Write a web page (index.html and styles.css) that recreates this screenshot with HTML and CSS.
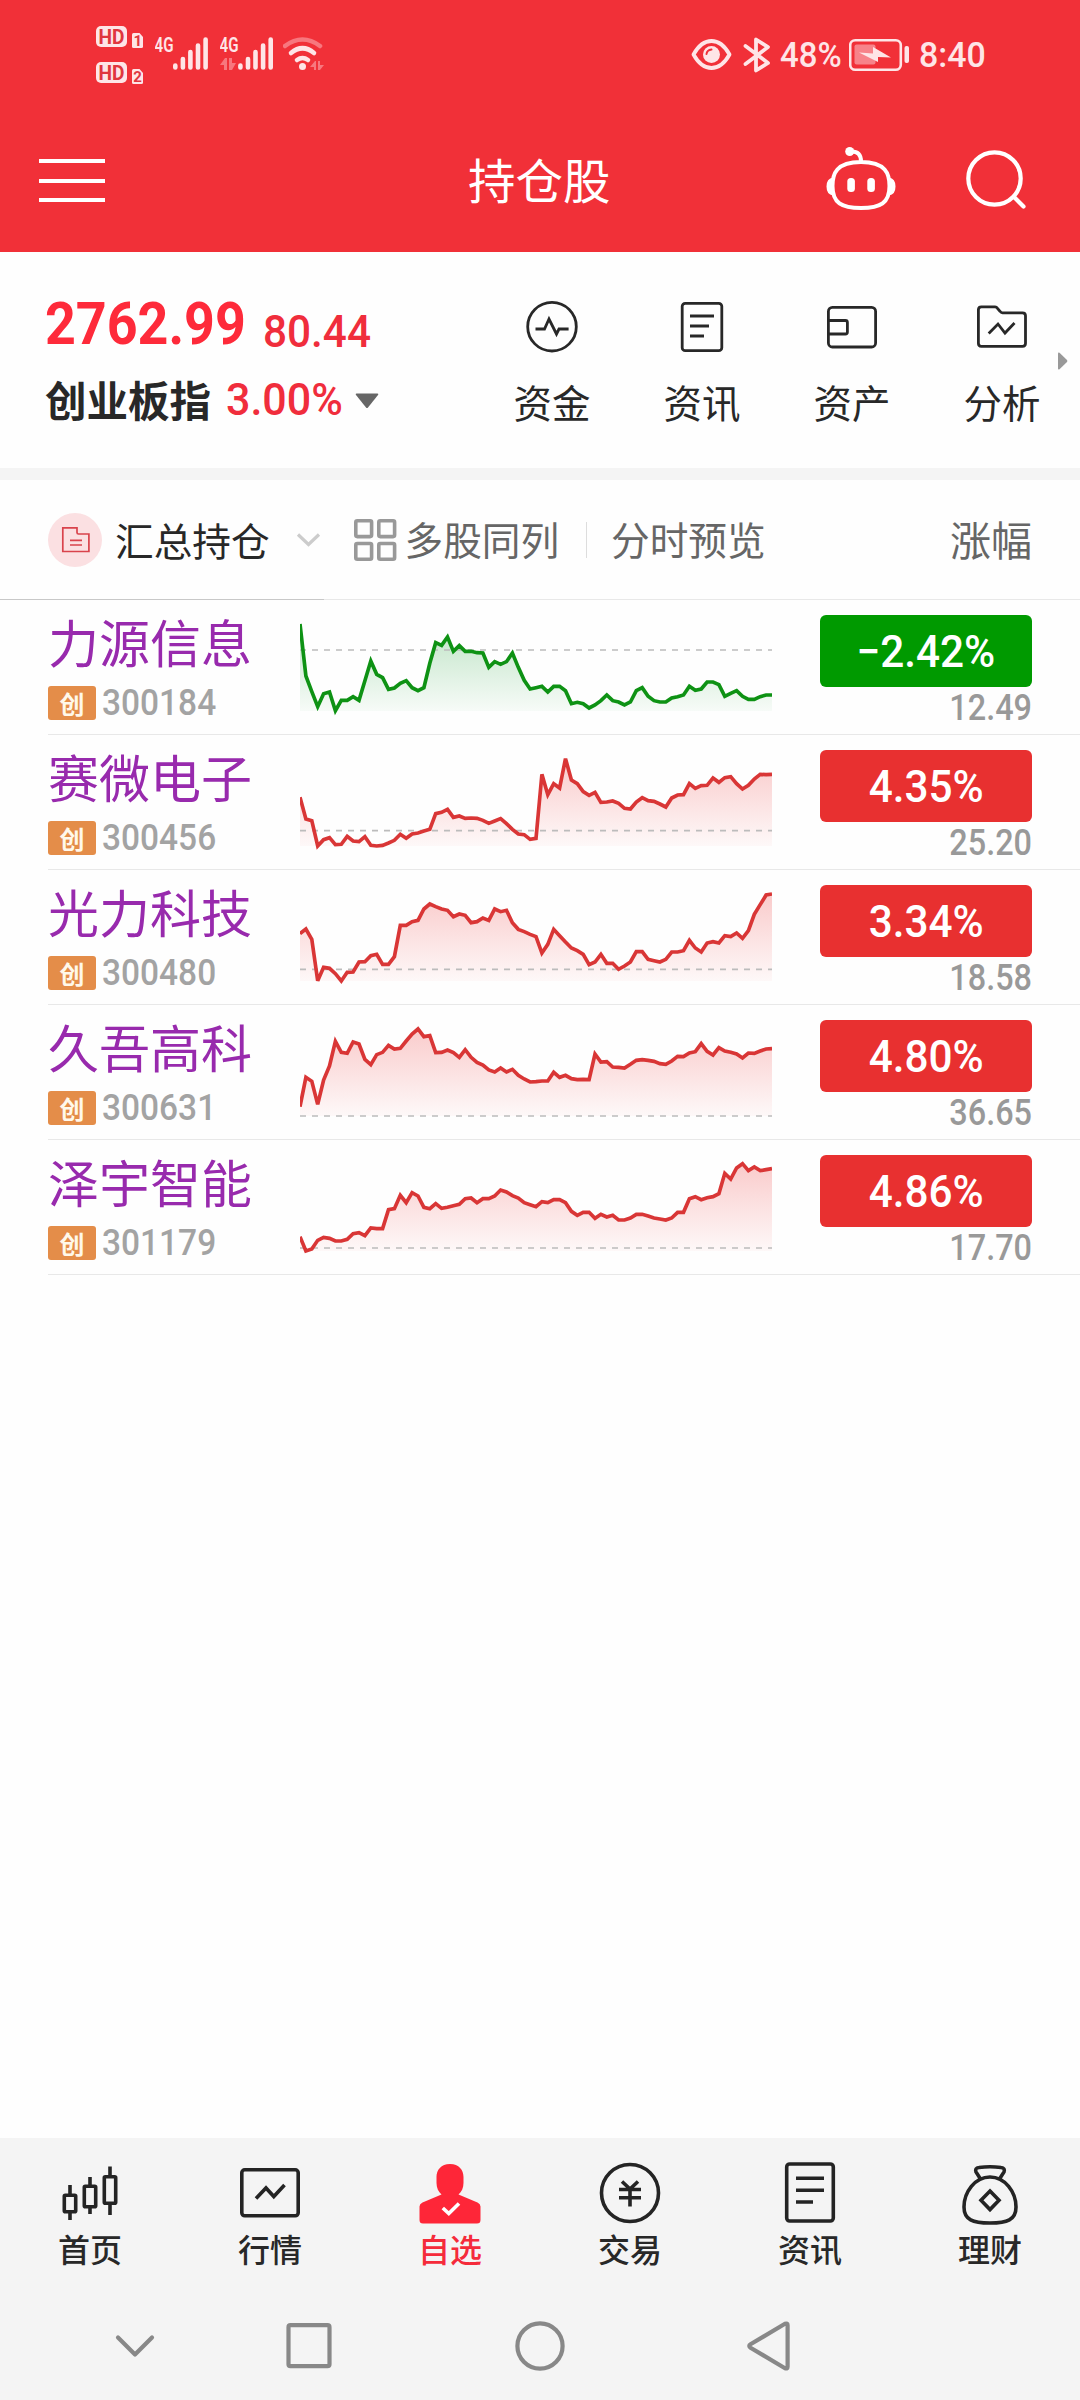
FILE: index.html
```html
<!DOCTYPE html>
<html lang="zh-CN">
<head>
<meta charset="utf-8">
<title>持仓股</title>
<link rel="stylesheet" href="styles.css">
</head>
<body>
<div class="app">
  <header class="header">
    <div class="status">
      <svg class="st-hd" viewBox="96 0 48 110" width="48" height="110">
        <g class="fill-soft">
          <rect x="96" y="26" width="31" height="21" rx="5"/><rect x="96" y="62" width="31" height="21" rx="5"/>
          <path d="M133.500 33h6l3.500 4v9.500q0 1.500-1.500 1.500h-8q-1.500 0-1.500-1.500v-12q0-1.500 1.500-1.500z"/>
          <path d="M133.500 69h6l3.500 4v9.500q0 1.500-1.500 1.500h-8q-1.500 0-1.500-1.500v-12q0-1.500 1.500-1.500z"/>
        </g>
        <g class="hd-text">
          <text x="98.500" y="44" textLength="26" lengthAdjust="spacingAndGlyphs">HD</text>
          <text x="98.500" y="80" textLength="26" lengthAdjust="spacingAndGlyphs">HD</text>
          <text class="sim" x="133.500" y="46">1</text><text class="sim" x="133.300" y="82">2</text>
        </g>
      </svg>
      <svg class="st-sig" viewBox="155 0 54 110" width="54" height="110">
        <text class="g4" x="154.500" y="52" textLength="19" lengthAdjust="spacingAndGlyphs">4G</text>
        <path class="bars" d="M175.300 65.500v2M182.900 59v8.500M190.400 52v15.500M198 45.500v22M205.600 39.500v28"/>
      </svg>
      <svg class="st-sig" viewBox="220 0 54 110" width="54" height="110">
        <text class="g4" x="219.500" y="52" textLength="19" lengthAdjust="spacingAndGlyphs">4G</text>
        <path class="bars" d="M240.400 65.500v2M248 59v8.500M255.500 52v15.500M263.100 45.500v22M270.700 39.500v28"/>
        <path class="faint" d="M220 65l5-7h2v12h-3v-5zM229 58h3v5h4l-4 7h-3z"/>
      </svg>
      <svg class="st-wifi" viewBox="283 0 42 110" width="42" height="110">
        <circle class="fill-soft" cx="302.500" cy="66.500" r="3.500"/>
        <path class="arc" d="M297 60q5.500-4 11 0M291 53q11.500-9.500 23 0"/>
        <path class="arc dim" d="M285 46q17.500-13 35 0"/>
        <path class="faint" d="M310 67l5-6h1v9h-2v-3zM318 61h2v4h4l-4 5h-2z"/>
      </svg>
      <div class="status-right">
        <svg class="st-eye" viewBox="690 0 42 110" width="42" height="110">
          <path class="line-soft" d="M692.500 54.500Q700 41 710.500 41T728.500 54.500Q721 68 710.500 68T692.500 54.500z"/>
          <circle class="fill-soft" cx="710.500" cy="54.500" r="8.500"/>
          <path class="eye-glint" d="M705.500 54q.5-4 5-4.500"/>
        </svg>
        <svg class="st-bt" viewBox="742 0 28 110" width="28" height="110">
          <path class="line-soft" d="M744.500 46L767 63l-12 7.500V39.500L767 47l-22.500 17"/>
        </svg>
        <span class="st-text"><span class="num st-pct">48%</span></span>
        <svg class="st-bat" viewBox="848 0 60 110" width="60" height="110">
          <rect class="bat-line" x="849.200" y="40.200" width="50.600" height="29.600" rx="5"/>
          <rect class="bat-fill" x="853.500" y="44.500" width="21" height="20" rx="2"/>
          <path class="fill-soft" d="M858 52.500l14 1v-6.500l18 10.500-13-.5v5z"/>
          <rect class="fill-soft" x="903.500" y="46" width="4.500" height="17" rx="2"/>
        </svg>
        <span class="st-text st-time"><span class="num st-clock">8:40</span></span>
      </div>
    </div>
    <nav class="titlebar">
      <svg class="menu" viewBox="39 150 66 64" width="66" height="64"><path d="M39 162h66M39 182h66M39 201h66"/></svg>
      <h1>持仓股</h1>
      <svg class="robot" viewBox="826 144 71 70" width="71" height="70">
        <path d="M861 162c25 0 28.500 12 28.500 24 0 17-9 22-28.500 22s-28.500-5-28.500-22c0-12 3.500-24 28.500-24zM851 151.500q10-.5 10 10"/>
        <circle cx="849.700" cy="151.500" r="4.500"/>
        <path class="solid" d="M833 177.500q-6.500 1-6.500 9t6.500 9zM889 177.500q6.500 1 6.500 9t-6.500 9z"/>
        <rect x="847.300" y="178" width="7.600" height="14" rx="3.500"/><rect x="867.300" y="178" width="7.600" height="14" rx="3.500"/>
      </svg>
      <svg class="search" viewBox="965 144 62 70" width="62" height="70"><circle cx="994.500" cy="178.500" r="26.200"/><path d="M1014.500 197.500l9 9"/></svg>
    </nav>
  </header>

  <section class="index-panel">
    <div class="index">
      <div class="index-row">
        <span class="num value">2762.99</span><span class="num change">80.44</span>
      </div>
      <div class="index-row second">
        <b>创业板指</b><span class="num pct">3.00%</span>
        <svg class="caret" viewBox="0 0 24 16" width="24" height="16"><path d="M1.500 .5h21q1.500 0 .5 1.500L13 14.500q-1 1-2 0L1 2Q0 .5 1.500 .5z"/></svg>
      </div>
    </div>
    <div class="quick">
      <a><svg viewBox="525 300 54 54" width="54" height="54"><circle cx="552" cy="326.700" r="24.300"/><path d="M535.500 329h9l4.500-10 7.500 15 2.500-5h9.600"/></svg><span>资金</span></a>
      <a><svg viewBox="675 300 54 54" width="54" height="54"><rect x="682.200" y="303.300" width="39.600" height="47.400" rx="3"/><path d="M690 316h24M690 326h19M690 336h14"/></svg><span>资讯</span></a>
      <a><svg viewBox="825 300 54 54" width="54" height="54"><rect x="828.400" y="307.400" width="47.200" height="39.600" rx="4"/><path d="M828.400 320.500h17q2 0 2 2v9.500q0 2-2 2h-17"/></svg><span>资产</span></a>
      <a><svg viewBox="975 300 54 54" width="54" height="54"><path d="M981.400 306.800h13.600q1.500 0 2.500 1.500l2.500 3q1 1.500 2.500 1.500h20q3 0 3 3v27.500q0 3-3 3h-41.100q-3 0-3-3v-33.500q0-3 3-3zM988.700 333.500l9.300-9.500 7 9 9.500-10"/></svg><span>分析</span></a>
    </div>
    <svg class="more" viewBox="0 0 11 18" width="11" height="18"><path d="M1 1.500q0-1.500 1.500-.8L10 8q.8 1 0 2l-7.500 7.300Q1 18 1 16.500z"/></svg>
  </section>

  <section class="toolbar">
    <svg class="folder" viewBox="48 512 54 54" width="54" height="54"><circle cx="75" cy="539" r="27"/><path d="M62.800 526.800h14.200v4.700q0 1.500 1.500 1.500h10.400v17.500h-26.100zM70 539.300h12M70 544h12"/></svg>
    <span class="group">汇总持仓</span>
    <svg class="chev" viewBox="296 530 25 18" width="25" height="18"><path d="M298 533.500l10.500 10 10.500-10"/></svg>
    <svg class="grid4" viewBox="353 518 43 44" width="43" height="44"><rect x="354.800" y="520.800" width="15.800" height="15.800" rx="1.500"/><rect x="377.800" y="520.800" width="15.800" height="15.800" rx="1.500"/><rect x="354.800" y="543.500" width="15.800" height="15.800" rx="1.500"/><rect x="377.800" y="543.500" width="15.800" height="15.800" rx="1.500"/></svg>
    <span class="multi">多股同列</span>
    <i class="divider"></i>
    <span class="preview">分时预览</span>
    <span class="sort">涨幅</span>
  </section>

  <main class="list">
    <article class="stock down">
      <div class="info"><h2>力源信息</h2><p><em>创</em><span class="num">300184</span></p></div>
      <svg class="spark" viewBox="60 0 1416 405" width="472" height="135" data-base="333" data-prev="150" data-series="72 228 275 320 281 276 332 301 301 290 301 242 183 223 233 268 264 250 242 263 272 263 190 128 136 111 154 137 154 154 158 159 202 185 193 185 159 202 241 267 263 259 276 259 259 272 311 307 311 324 315 302 285 302 306 315 306 272 263 289 302 306 306 294 290 285 259 271 267 246 246 254 289 280 272 289 298 298 290 285 285"></svg>
      <div class="quote"><strong><span class="num">−2.42%</span></strong><span class="num price">12.49</span></div>
    </article>
    <article class="stock up">
      <div class="info"><h2>赛微电子</h2><p><em>创</em><span class="num">300456</span></p></div>
      <svg class="spark" viewBox="60 405 1416 405" width="472" height="135" data-base="738" data-prev="692" data-series="592 657 662 738 719 713 734 733 709 723 725 710 736 738 736 729 721 703 715 702 699 693 688 641 637 628 652 648 655 654 655 661 670 663 656 671 688 702 704 718 715 523 584 551 564 476 540 551 575 586 577 607 606 603 610 625 627 606 593 602 604 612 621 594 585 584 551 565 557 556 534 547 533 530 551 567 556 537 523 524 523"></svg>
      <div class="quote"><strong><span class="num">4.35%</span></strong><span class="num price">25.20</span></div>
    </article>
    <article class="stock up">
      <div class="info"><h2>光力科技</h2><p><em>创</em><span class="num">300480</span></p></div>
      <svg class="spark" viewBox="60 30 1416 405" width="472" height="135" data-base="363" data-prev="328" data-series="221 207 238 362 322 325 341 363 337 336 306 305 287 283 313 313 290 196 196 185 181 147 132 140 147 151 170 162 166 188 185 174 181 147 155 151 188 208 215 223 230 279 253 208 227 246 264 272 283 314 306 283 310 310 328 318 306 275 275 298 302 306 298 276 276 272 241 264 276 249 245 249 227 230 219 235 212 163 134 105 102"></svg>
      <div class="quote"><strong><span class="num">3.34%</span></strong><span class="num price">18.58</span></div>
    </article>
    <article class="stock up">
      <div class="info"><h2>久吾高科</h2><p><em>创</em><span class="num">300631</span></p></div>
      <svg class="spark" viewBox="60 435 1416 405" width="472" height="135" data-base="768" data-prev="768" data-series="740 652 664 733 660 618 544 577 580 546 552 598 614 584 577 556 567 565 543 522 507 530 527 578 577 570 578 592 569 592 607 615 630 636 624 636 628 646 657 666 665 663 663 637 652 646 656 659 658 659 582 606 605 621 622 624 613 601 599 601 604 611 613 603 589 590 579 575 551 574 585 563 573 577 582 594 579 580 573 567 566"></svg>
      <div class="quote"><strong><span class="num">4.80%</span></strong><span class="num price">36.65</span></div>
    </article>
    <article class="stock up">
      <div class="info"><h2>泽宇智能</h2><p><em>创</em><span class="num">301179</span></p></div>
      <svg class="spark" viewBox="60 30 1416 405" width="472" height="135" data-base="363" data-prev="354" data-series="320 363 357 331 322 325 333 333 328 311 308 317 294 296 296 239 236 196 218 188 198 232 236 221 235 232 227 223 206 204 218 206 206 198 180 186 197 204 218 224 230 215 218 209 209 218 244 256 247 247 265 253 261 256 270 270 264 253 253 258 264 267 270 264 247 247 206 200 209 203 200 191 130 147 114 101 122 111 122 119 116"></svg>
      <div class="quote"><strong><span class="num">4.86%</span></strong><span class="num price">17.70</span></div>
    </article>
  </main>

  <footer class="footer">
    <nav class="tabs">
      <a><svg viewBox="55 2158 70 70" width="70" height="70"><path d="M70 2185v9M70 2213v7M90 2177v9M90 2207v7M110 2166.500v10M110 2204v11"/><rect x="64.300" y="2195.300" width="11.400" height="16.400" rx="1"/><rect x="84.300" y="2186.300" width="11.400" height="20.400" rx="1"/><rect x="104.300" y="2176.800" width="11.400" height="26.400" rx="1"/></svg><span>首页</span></a>
      <a><svg viewBox="235 2158 70 70" width="70" height="70"><rect x="241.800" y="2169.800" width="56.400" height="46" rx="3"/><path d="M256 2198.500l10-10.500 7.800 8.500 10.700-11.500"/></svg><span>行情</span></a>
      <a class="active"><svg viewBox="415 2158 70 70" width="70" height="70"><path class="person" d="M450 2164c9 0 13.500 6 13.500 13v6c0 5-2 9-5 11.500l19 8q3 1.500 3 4v13.500q0 3.500-3.500 3.500h-54q-3.500 0-3.500-3.500v-13.500q0-2.500 3-4l19-8c-3-2.500-5-6.500-5-11.500v-6c0-7 4.500-13 13.500-13z"/><path class="tick" d="M442.800 2208l6 5.500 10.200-10"/></svg><span>自选</span></a>
      <a><svg viewBox="595 2158 70 70" width="70" height="70"><circle cx="630" cy="2193" r="28.500"/><path d="M622 2181.500l8 7.500 8-7.500M630 2189v17.500M619 2189.500h22M619 2197.700h22"/></svg><span>交易</span></a>
      <a><svg viewBox="775 2158 70 70" width="70" height="70"><rect x="786.700" y="2164" width="46.600" height="57" rx="3"/><path d="M796 2178.300h28M796 2190.300h28M796 2202h17"/></svg><span>资讯</span></a>
      <a><svg viewBox="955 2158 70 70" width="70" height="70"><path d="M990 2177c-15 0-26 15-26 30 0 13 9 16 26 16s26-3 26-16c0-15-11-30-26-30zM980.500 2179l-4.500-7q-1.500-4 3-4.500 11-1.500 22 0 4.500.5 3 4.500l-4.500 7M990 2191l9 9.300-9 9.300-9-9.300z"/></svg><span>理财</span></a>
    </nav>
    <nav class="system">
      <svg class="s-down" viewBox="115 2320 40 52" width="40" height="52"><path d="M118 2337.500l17 17 17-17"/></svg>
      <svg class="s-square" viewBox="286 2320 46 52" width="46" height="52"><rect x="288.500" y="2325.200" width="41" height="41" rx="2"/></svg>
      <svg class="s-circle" viewBox="515 2320 50 52" width="50" height="52"><circle cx="540" cy="2346" r="22.600"/></svg>
      <svg class="s-back" viewBox="746 2320 45 52" width="45" height="52"><path d="M785 2323.800l-34.500 20.500q-2.500 1.700 0 3.400l34.500 20.500q2.600 1 2.600-1.500v-41.400q0-2.500-2.600-1.500z"/></svg>
    </nav>
  </footer>
</div>
<script src="charts.js"></script>
</body>
</html>
```
FILE: styles.css
```css
* { box-sizing: border-box; margin: 0; padding: 0; }
body { width: 1080px; background: #fff; font-family: "Noto Sans CJK SC", sans-serif; color: #282828; }
.app { width: 1080px; height: 2400px; display: flex; flex-direction: column; background: #fefefe; overflow: hidden; }
svg { display: block; flex: none; fill: none; }
.num { display: inline-block; font-family: Roboto, sans-serif; white-space: nowrap; transform-origin: left center; }

.header { height: 252px; background: #f13038; color: #fff; }
.status { height: 110px; display: flex; align-items: center; padding: 0 97px 0 96px; }
.st-hd { margin-right: 11px; }
.st-sig { margin-right: 11px; }
.st-sig + .st-wifi { margin-left: -2px; }
.fill-soft { fill: #fee5e7; }
.hd-text { font-family: Roboto, sans-serif; font-weight: 700; font-size: 21px; fill: #e0363e; }
.hd-text .sim { font-size: 15px; }
.g4 { font-family: Roboto, sans-serif; font-weight: 600; font-size: 21px; fill: #fee5e7; }
.bars { stroke: #fee5e7; stroke-width: 4.6; stroke-linecap: round; }
.faint { fill: #f7777e; }
.arc { stroke: #fee5e7; stroke-width: 4.6; stroke-linecap: round; }
.arc.dim { stroke: #f7777e; }
.line-soft { stroke: #fee5e7; stroke-width: 3.8; stroke-linecap: round; stroke-linejoin: round; }
.eye-glint { stroke: #f13038; stroke-width: 2; stroke-linecap: round; }
.status-right { margin-left: auto; display: flex; align-items: center; }
.st-bt { margin-left: 10px; }
.st-text { width: 61px; margin: -2px 8px 0 9px; font-size: 35px; font-weight: 500; line-height: 60px; color: #fee5e7; }
.st-time { width: 64px; margin: -2px 0 0 10px; }
.st-pct { transform: scaleX(.94); }
.st-clock { transform: scaleX(.97); }
.bat-line { stroke: #fee5e7; stroke-width: 2.6; }
.bat-fill { fill: #f7838a; }
.titlebar { height: 142px; display: flex; align-items: flex-start; padding: 34px 53px 0 39px; }
.menu { margin-top: 5px; stroke: #fff; stroke-width: 4; }
.titlebar h1 { width: 144px; margin: 0 0 0 363px; font-size: 47.500px; line-height: 70px; font-weight: 400; white-space: nowrap; }
.robot { margin-left: 214px; stroke: #fff; stroke-width: 4; }
.robot circle, .robot rect, .robot .solid { fill: #fff; stroke: none; }
.search { margin-left: 68px; stroke: #fff; stroke-width: 4.2; stroke-linecap: round; }

.index-panel { height: 216px; position: relative; display: flex; padding: 42px 3px 0 45px; }
.index { width: 432px; }
.index-row { height: 60px; display: flex; line-height: 60px; color: #fe2a3a; }
.index-row.second { margin-top: 16px; }
.value { width: 218px; font-size: 59px; font-weight: 700; transform: scaleX(.912); }
.change { margin-top: 8px; font-size: 45px; font-weight: 500; color: #f02d3c; transform: scaleX(.94); }
.index-row b { width: 181px; margin-top: -1px; font-size: 41.500px; font-weight: 700; color: #282828; white-space: nowrap; }
.pct { width: 129px; font-size: 45px; font-weight: 500; color: #f02d3c; transform: scaleX(.955); }
.caret { margin-top: 23px; fill: #666; }
.quick { display: grid; grid-template-columns: repeat(4, 150px); }
.quick a { display: flex; flex-direction: column; align-items: center; padding-top: 6px; }
.quick svg { stroke: #282828; stroke-width: 2.8; }
.quick span { margin-top: 20px; font-size: 38.500px; line-height: 54px; }
.more { position: absolute; right: 12px; top: 100px; fill: #999; }

.toolbar { height: 120px; margin-top: 12px; display: flex; align-items: center; padding: 0 48px; font-size: 38.700px; line-height: 60px; color: #666; white-space: nowrap; background: linear-gradient(#c8c8c8, #c8c8c8) 0 100% / 324px 1px no-repeat, linear-gradient(#e8e8e8, #e8e8e8) 0 100% / 100% 1px no-repeat; box-shadow: 0 -12px 0 #f4f4f4; }
.folder { stroke: #d9434c; stroke-width: 1.700; }
.folder circle { fill: #fbe0e2; stroke: none; }
.group { width: 181px; margin: -2px 0 0 13px; color: #282828; }
.chev { stroke: #ccc; stroke-width: 3.200; margin: -1px 0 0 1px; }
.grid4 { margin-left: 33px; stroke: #999; stroke-width: 3.600; }
.multi { width: 182px; margin-left: 7px; margin-top: -4px; }
.divider { width: 1px; height: 36px; background: #ddd; }
.preview { width: 340px; margin-left: 24px; margin-top: -4px; }
.sort { font-size: 41px; margin-top: -4px; }

.stock { height: 135px; display: flex; margin-left: 48px; padding-right: 48px; border-bottom: 1px solid #e8e8e8; }
.info { width: 252px; }
.info h2 { margin-top: 4px; height: 74px; font-size: 51px; line-height: 74px; font-weight: 400; color: #982aad; white-space: nowrap; }
.info p { display: flex; height: 34px; margin-top: 8px; }
.info em { width: 48px; height: 34px; border-radius: 3px; background: #e48d49; color: #fff8ea; font-style: normal; font-size: 25px; font-weight: 700; line-height: 34px; text-align: center; }
.info .num { margin-left: 6px; font-size: 36px; line-height: 34px; font-weight: 500; color: #a3a3a3; transform: scaleX(.93); }
.spark .line { fill: none; stroke-width: 11; stroke-linejoin: miter; stroke-miterlimit: 3; }
.spark .prev { stroke: #bcbcbc; stroke-width: 5; stroke-dasharray: 18; }
.down .line { stroke: #0e9214; }
.up .line { stroke: #d93636; }
.quote { width: 212px; margin-left: auto; padding-top: 15px; }
.quote strong { display: flex; justify-content: center; height: 72px; border-radius: 6px; font-size: 45px; line-height: 73px; font-weight: 500; color: #fff; }
.quote strong .num { transform: scaleX(.94); transform-origin: center; }
.up strong { background: #e83030; }
.down strong { background: #009a00; }
.price { display: block; margin-top: 3px; height: 36px; font-size: 36px; line-height: 36px; font-weight: 500; color: #999; text-align: right; transform: scaleX(.9); transform-origin: right center; }

.footer { margin-top: auto; height: 262px; background: #f4f4f4; }
.tabs { height: 154px; display: grid; grid-template-columns: repeat(6, 180px); }
.tabs a { display: flex; flex-direction: column; align-items: center; padding-top: 20px; }
.tabs svg { stroke: #242424; stroke-width: 3.600; }
.tabs span { margin-top: -3px; font-size: 32px; line-height: 46px; font-weight: 500; }
.active { color: #f52b3b; }
.tabs .person { fill: #fe2638; stroke: none; }
.tabs .tick { stroke: #fff; }
.system { height: 108px; display: flex; padding: 28px 0 0 115px; stroke: #888; stroke-width: 4.200; stroke-linecap: round; stroke-linejoin: round; }
.s-square { margin-left: 131px; }
.s-circle { margin-left: 183px; }
.s-back { margin-left: 181px; }
```
FILE: charts.js
```js
// Builds each intraday sparkline: gradient area, previous-close line, price line.
const LEFT = 60, RIGHT = 1476;
document.querySelectorAll('.spark').forEach((svg, n) => {
  const ys = svg.dataset.series.split(' ').map(Number);
  const step = (RIGHT - LEFT) / (ys.length - 1);
  const pts = ys.map((y, i) => (LEFT + i * step).toFixed(1) + ',' + y).join(' ');
  const base = svg.dataset.base, prev = svg.dataset.prev;
  const color = svg.parentNode.classList.contains('down') ? '#0e9a28' : '#ee3b3b';
  const top = Math.min(...ys);
  svg.innerHTML =
    `<defs><linearGradient id="g${n}" gradientUnits="userSpaceOnUse" x1="0" x2="0" y1="${top}" y2="${base}">
      <stop offset="0" stop-color="${color}" stop-opacity=".26"/><stop offset="1" stop-color="${color}" stop-opacity=".03"/>
    </linearGradient></defs>
    <polygon points="${LEFT},${base} ${pts} ${RIGHT},${base}" fill="url(#g${n})"/>
    <path class="prev" d="M${LEFT} ${prev}H${RIGHT}"/>
    <polyline class="line" points="${pts}"/>`;
});
```
